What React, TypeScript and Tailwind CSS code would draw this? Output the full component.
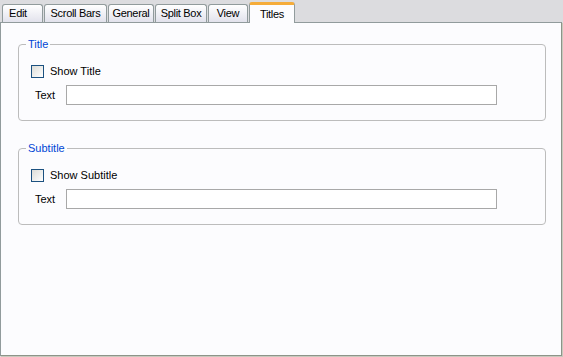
import React from "react";

const tabs = ["Edit", "Scroll Bars", "General", "Split Box", "View", "Titles"];
const widths = ["w-[41px] pr-[9px]", "w-[63px]", "w-[46px]", "w-[52px]", "w-[40px]", "w-[46px]"];

function Group({ legend, label, mt }: { legend: string; label: string; mt: string }) {
  return (
    <fieldset
      className={`${mt} ml-[17px] w-[528px] rounded-[4px] border border-[#bcbcbc] px-[7px] pb-[15px]`}
    >
      <legend className="px-[2px] text-[11px] leading-[13px] text-[#0046d5]">{legend}</legend>
      <div className="mt-[14px] ml-[5px] flex items-center gap-[6px] h-[13px]">
        <span className="block h-[13px] w-[13px] border border-[#1c5180] bg-gradient-to-br from-[#dcdcd7] to-white" />
        <span className="text-[11px] leading-[13px]">{label}</span>
      </div>
      <div className="mt-[7px] ml-[9px] flex items-center">
        <span className="w-[31px] text-[11px]">Text</span>
        <div className="h-[20px] w-[431px] border border-[#a8a8a8] bg-white" />
      </div>
    </fieldset>
  );
}

export default function App() {
  return (
    <div
      className="relative h-[357px] w-[563px] overflow-hidden bg-[#dcdcdf] text-black"
      style={{ fontFamily: '"Liberation Sans", Arial, sans-serif' }}
    >
      {/* tab strip */}
      <div className="flex h-[22px] items-end pl-[2px]">
        {tabs.map((t, i) =>
          t === "Titles" ? (
            <div
              key={t}
              className={`${widths[i]} relative z-10 -mb-[1px] flex h-[21px] items-start justify-center whitespace-nowrap rounded-t-[3px] border-x border-t-[3px] border-x-[#919b9c] border-t-[#f5ac3a] bg-[#fcfcfe] pt-[1px] text-[11px] tracking-[-0.3px]`}
            >
              {t}
            </div>
          ) : (
            <div
              key={t}
              className={`${widths[i]} mr-[1px] flex h-[18px] items-center justify-center whitespace-nowrap rounded-t-[3px] border-x border-t border-[#919b9c] bg-gradient-to-b from-white to-[#e2e2ec] text-[11px] tracking-[-0.3px]`}
            >
              {t}
            </div>
          )
        )}
      </div>

      {/* panel */}
      <div className="h-[334px] w-[562px] border border-[#919b9c] border-r-[#8d9489] border-b-[#8d9489] bg-[#fcfcfe] shadow-[1px_1px_0_#c8c9bd]">
        <Group legend="Title" label="Show Title" mt="mt-[15px]" />
        <Group legend="Subtitle" label="Show Subtitle" mt="mt-[21px]" />
      </div>
    </div>
  );
}
